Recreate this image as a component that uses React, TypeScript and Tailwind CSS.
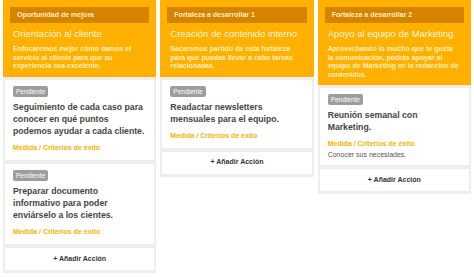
import React from "react";

type Card = { title: string[]; note?: string };
type Col = { tag: string; title: string; desc: string[]; cards: Card[] };

const cols: Col[] = [
  {
    tag: "Oportunidad de mejora",
    title: "Orientación al cliente",
    desc: [
      "Enfocaremos mejor cómo damos el",
      "servicio al cliente para que su",
      "experiencia sea excelente.",
    ],
    cards: [
      {
        title: [
          "Seguimiento de cada caso para",
          "conocer en qué puntos",
          "podemos ayudar a cada cliente.",
        ],
      },
      {
        title: [
          "Preparar documento",
          "informativo para poder",
          "enviárselo a los cientes.",
        ],
      },
    ],
  },
  {
    tag: "Fortaleza a desarrollar 1",
    title: "Creación de contenido interno",
    desc: [
      "Sacaremos partido de esta fortaleza",
      "para que puedas llevar a cabo tareas",
      "relacionadas.",
    ],
    cards: [
      {
        title: ["Readactar newsletters", "mensuales para el equipo."],
      },
    ],
  },
  {
    tag: "Fortaleza a desarrollar 2",
    title: "Apoyo al equipo de Marketing",
    desc: [
      "Aprovechando lo mucho que te gusta",
      "la comunicación, podrás apoyar al",
      "equipo de Marketing en la redacción de",
      "contenidos.",
    ],
    cards: [
      {
        title: ["Reunión semanal con", "Marketing."],
        note: "Conocer sus necesiades.",
      },
    ],
  },
];

function Lines({ lines }: { lines: string[] }) {
  return (
    <>
      {lines.map((l, i) => (
        <div key={i} className="whitespace-nowrap">
          {l}
        </div>
      ))}
    </>
  );
}

export default function App() {
  return (
    <div className="w-[474px] h-[277px] bg-white font-['Liberation_Sans',Arial,sans-serif] grid grid-cols-3 gap-[4px] px-[3px] items-start overflow-hidden">
      {cols.map((c, ci) => (
        <div key={ci} className="flex flex-col bg-[#eeeeee] pb-[3px]">
          <div className="bg-[#ffb000] px-[7px] pt-[7px] pb-[6px]">
            <div className="bg-[#d68400] h-[16px] px-[7px] flex items-center text-[7px] font-bold text-[#ffeec4] whitespace-nowrap">
              {c.tag}
            </div>
            <div className="px-[3px] mt-[3px] text-[9.5px] leading-[16px] text-[#fff7de] whitespace-nowrap">
              {c.title}
            </div>
            <div className="px-[3px] mt-[3px] text-[7px] leading-[8.5px] font-bold text-[#fff0bd]">
              <Lines lines={c.desc} />
            </div>
          </div>
          <div className="flex flex-col gap-[4px] px-[2px] pt-[3px]">
            {c.cards.map((k, ki) => (
              <div
                key={ki}
                className={
                  k.note
                    ? "bg-white px-[8px] pt-[6px] pb-[5px] flex flex-col items-start"
                    : "bg-white px-[8px] pt-[6px] pb-[7px] flex flex-col items-start"
                }
              >
                <div className="bg-[#9d9d9d] text-white text-[6.5px] leading-[11px] px-[3px] rounded-[2px] whitespace-nowrap">
                  Pendiente
                </div>
                <div className="mt-[4px] text-[8.7px] leading-[12.3px] font-bold text-[#444444]">
                  <Lines lines={k.title} />
                </div>
                <div className="mt-[5.5px] text-[7px] leading-[10px] font-bold text-[#f5b400] whitespace-nowrap">
                  Medida / Criterios de éxito
                </div>
                {k.note && (
                  <div className="mt-[1px] text-[7px] leading-[10px] text-[#555555] whitespace-nowrap">
                    {k.note}
                  </div>
                )}
              </div>
            ))}
            <div className="bg-white h-[22px] flex items-center justify-center text-[7px] font-bold text-[#333333] whitespace-nowrap">
              + Añadir Acción
            </div>
          </div>
        </div>
      ))}
    </div>
  );
}
